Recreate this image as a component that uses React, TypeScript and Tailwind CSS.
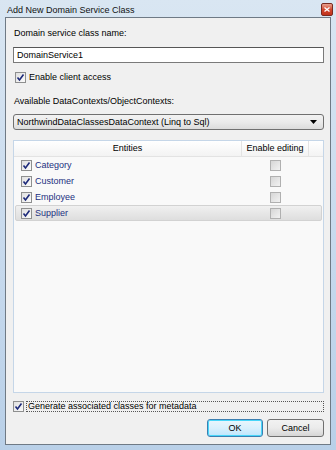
const entities = [
  { name: 'Category', selected: false },
  { name: 'Customer', selected: false },
  { name: 'Employee', selected: false },
  { name: 'Supplier', selected: true },
];

const Check = ({ on = true, muted = false }: { on?: boolean; muted?: boolean }) => (
  <span
    className={`flex h-[11px] w-[11px] shrink-0 items-center justify-center border ${
      muted ? 'border-[#b0b0b0] bg-gradient-to-br from-[#d6d6d6] to-[#f2f2f2]' : 'border-[#8e8f8f] bg-gradient-to-br from-[#e0e0e0] to-[#fbfbfb]'
    }`}
  >
    {on && (
      <svg width="9" height="9" viewBox="0 0 9 9">
        <path d="M1.5 4.5 L3.5 7 L7.5 1.5" fill="none" stroke="#1d2a7a" strokeWidth="1.6" />
      </svg>
    )}
  </span>
);

export default function App() {
  return (
    <div
      className="flex h-[450px] w-[336px] flex-col bg-gradient-to-b from-[#d9e6f2] via-[#c9dbee] to-[#b9d0e8] text-[9px] text-black"
      style={{ fontFamily: '"Liberation Sans", Arial, sans-serif' }}
    >
      {/* title bar */}
      <div className="flex h-[17px] items-center justify-between pl-[7px] pr-[3px]">
        <span className="pt-[3px] leading-none text-[#111]">Add New Domain Service Class</span>
        <span className="mt-[2px] flex h-[13px] w-[12px] items-center justify-center rounded-[2px] border border-[#7a2a20] bg-gradient-to-b from-[#e8a08f] via-[#d2472f] to-[#c0311a]">
          <svg width="6" height="5" viewBox="0 0 6 5">
            <path d="M0.5 0.5 L5.5 4.5 M5.5 0.5 L0.5 4.5" stroke="#fff" strokeWidth="1.3" />
          </svg>
        </span>
      </div>

      {/* content */}
      <div className="mx-[5px] mb-[5px] flex flex-1 flex-col border border-[#6f7a85] bg-[#f0f0f0] pb-[7px] pl-[7px] pr-[6px]">
        <div className="pl-[1px] pt-[8px] leading-[15px]">Domain service class name:</div>
        <div className="mt-[6px] flex h-[16px] items-center border border-[#7a7a7a] border-t-[#565656] bg-white px-[3px] leading-none">
          DomainService1
        </div>
        <label className="mt-[9px] flex h-[11px] items-center gap-[3px] pl-[2px] leading-none">
          <Check />
          <span>Enable client access</span>
        </label>
        <div className="mt-[11px] pl-[1px] leading-[15px]">Available DataContexts/ObjectContexts:</div>
        <div className="mt-[5px] flex h-[16px] items-center justify-between rounded-[3px] border border-[#707070] bg-gradient-to-b from-[#f2f2f2] via-[#ebebeb] to-[#dcdcdc] pl-[3px] pr-[6px] leading-none">
          <span>NorthwindDataClassesDataContext (Linq to Sql)</span>
          <svg width="7" height="4" viewBox="0 0 7 4">
            <path d="M0 0 H7 L3.5 4 Z" fill="#000" />
          </svg>
        </div>

        {/* grid */}
        <div className="mt-[10px] flex flex-1 flex-col border border-[#c5d6e8] bg-[#f9f9f9]">
          <div className="flex h-[16px] border-b border-[#e3e3e3] bg-gradient-to-b from-[#ffffff] to-[#f3f3f3] leading-none">
            <div className="flex w-[228px] items-center justify-center border-r border-[#e3e3e3]">Entities</div>
            <div className="flex w-[67px] items-center justify-center border-r border-[#e3e3e3]">Enable editing</div>
            <div className="flex-1" />
          </div>
          <div className="flex flex-col">
            {entities.map(e => (
              <div
                key={e.name}
                className={`mx-[1px] flex h-[16px] items-center rounded-[2px] ${
                  e.selected ? 'border border-[#d2d2d2] bg-gradient-to-b from-[#f0f0f0] to-[#dedede]' : 'border border-transparent'
                }`}
              >
                <div className="flex w-[226px] items-center gap-[3px] pl-[5px] text-[#23307f]">
                  <Check />
                  <span className="leading-none">{e.name}</span>
                </div>
                <div className="flex w-[67px] justify-center">
                  <Check on={false} muted />
                </div>
              </div>
            ))}
          </div>
        </div>

        <label className="mt-[8px] flex h-[11px] items-center">
          <Check />
          <span className="ml-[2px] flex h-[11px] flex-1 items-center border border-dotted border-[#555] pl-[1px] leading-none">
            Generate associated classes for metadata
          </span>
        </label>

        <div className="mt-[7px] flex justify-end gap-[4px]">
          <button className="flex h-[18px] w-[56px] items-center justify-center rounded-[3px] border border-[#3c7fb1] bg-gradient-to-b from-[#eaf6fd] via-[#d9f0fc] to-[#bee6fd] leading-none shadow-[inset_0_0_0_1px_#48d6f9]">
            OK
          </button>
          <button className="flex h-[18px] w-[57px] items-center justify-center rounded-[3px] border border-[#707070] bg-gradient-to-b from-[#f2f2f2] via-[#ebebeb] to-[#d6d6d6] leading-none">
            Cancel
          </button>
        </div>
      </div>
    </div>
  );
}
